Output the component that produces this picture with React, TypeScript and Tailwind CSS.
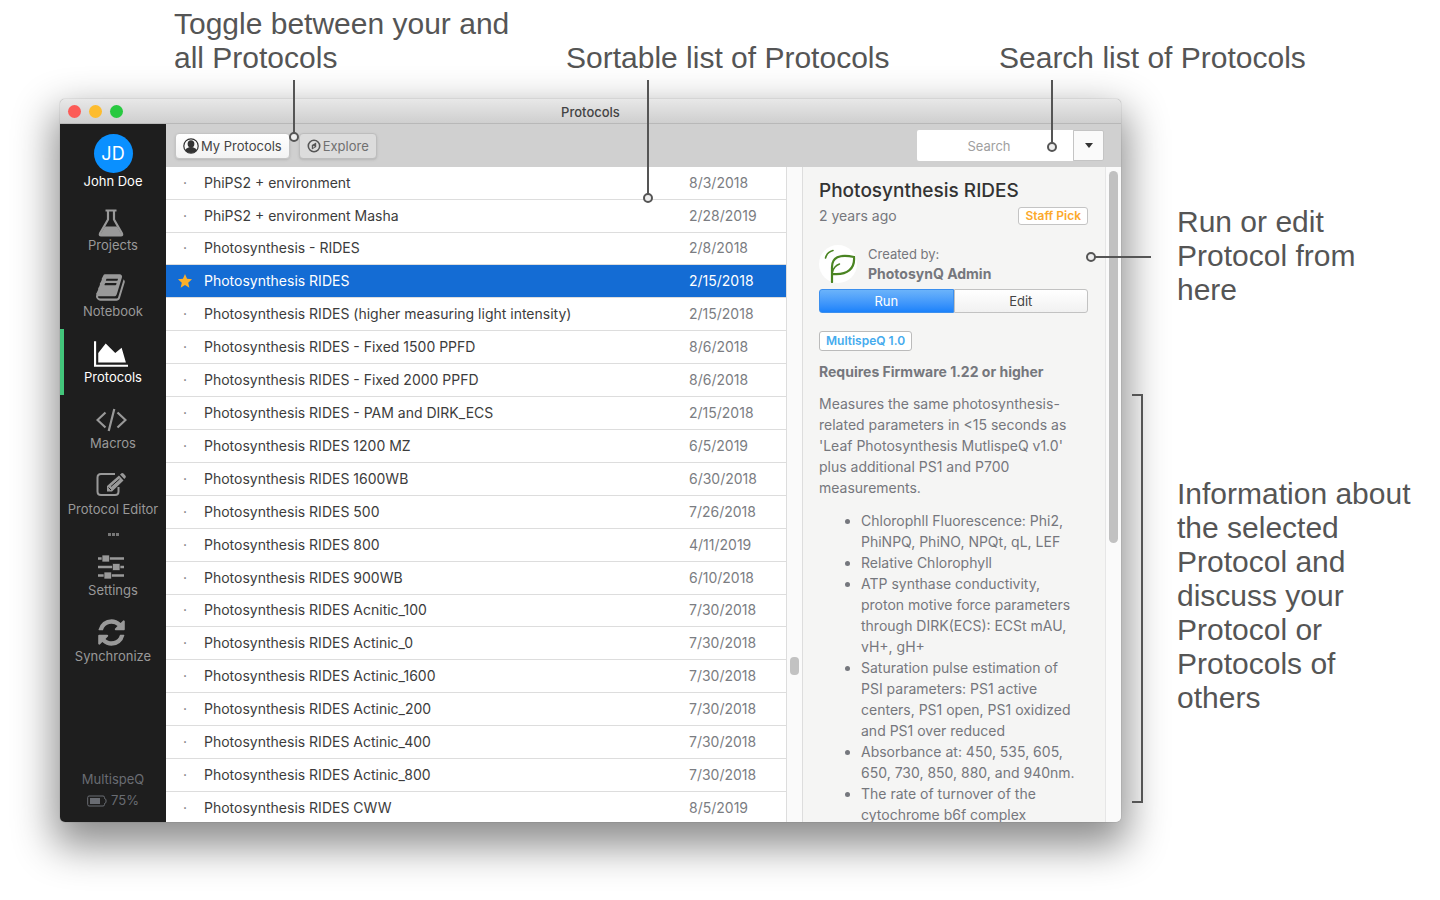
import type { ReactNode } from "react";

const FONT = "font-['Inter','Noto_Sans',sans-serif]";

const rows: [string, string][] = [
  ["PhiPS2 + environment", "8/3/2018"],
  ["PhiPS2 + environment Masha", "2/28/2019"],
  ["Photosynthesis - RIDES", "2/8/2018"],
  ["Photosynthesis RIDES", "2/15/2018"],
  ["Photosynthesis RIDES (higher measuring light intensity)", "2/15/2018"],
  ["Photosynthesis RIDES - Fixed 1500 PPFD", "8/6/2018"],
  ["Photosynthesis RIDES - Fixed 2000 PPFD", "8/6/2018"],
  ["Photosynthesis RIDES - PAM and DIRK_ECS", "2/15/2018"],
  ["Photosynthesis RIDES 1200 MZ", "6/5/2019"],
  ["Photosynthesis RIDES 1600WB", "6/30/2018"],
  ["Photosynthesis RIDES 500", "7/26/2018"],
  ["Photosynthesis RIDES 800", "4/11/2019"],
  ["Photosynthesis RIDES 900WB", "6/10/2018"],
  ["Photosynthesis RIDES Acnitic_100", "7/30/2018"],
  ["Photosynthesis RIDES Actinic_0", "7/30/2018"],
  ["Photosynthesis RIDES Actinic_1600", "7/30/2018"],
  ["Photosynthesis RIDES Actinic_200", "7/30/2018"],
  ["Photosynthesis RIDES Actinic_400", "7/30/2018"],
  ["Photosynthesis RIDES Actinic_800", "7/30/2018"],
  ["Photosynthesis RIDES CWW", "8/5/2019"],
];
const selectedRow = 3;

const FlaskIcon = () => (
  <svg width="26" height="28" viewBox="0 0 26 28" fill="none" stroke="currentColor">
    <path d="M7.500 1.500h11" strokeWidth="2" />
    <path d="M10 2v8.500L2 24.500Q1.300 26.500 3 26.500h20q1.700 0 1-2L16 10.500V2" strokeWidth="2.200" />
    <path d="M7 17.500h12l5 8.500H2z" fill="currentColor" stroke="none" />
  </svg>
);
const BookIcon = () => (
  <svg width="31" height="31" viewBox="0 0 1792 1792" fill="currentColor">
    <path d="M1639 478q40 57 18 129l-275 906q-19 64-76.5 107.5t-122.5 43.5h-923q-77 0-148.5-53.5t-99.5-131.5q-24-67-2-127 0-4 3-27t4-37q1-8-3-21.5t-3-19.5q2-11 8-21t16.5-23.5 16.5-23.5q23-38 45-91.5t30-91.5q3-10 .5-30t-.5-28q3-11 17-28t17-23q21-36 42-92t25-90q1-9-2.500-32t.5-28q4-13 22-30.500t22-22.500q19-26 42.500-84.500t27.500-96.500q1-8-3-25.500t-2-26.500q2-8 9-18t18-23 17-21q8-12 16.500-30.500t15-35 16-36 19.500-32 26.500-23.500 36-11.500 47.500 5.500l-1 3q38-9 51-9h761q74 0 114 56t18 130l-274 906q-36 119-71.500 153.500t-128.500 34.500h-869q-27 0-38 15-11 16-1 43 24 70 144 70h923q29 0 56-15.500t35-41.500l300-987q7-22 5-57 38 15 59 43zm-1064 2q-4 13 2 22.500t20 9.500h608q13 0 25.500-9.500t16.500-22.500l21-64q4-13-2-22.500t-20-9.500h-608q-13 0-25.500 9.500t-16.500 22.500zm-83 256q-4 13 2 22.500t20 9.500h608q13 0 25.500-9.500t16.500-22.500l21-64q4-13-2-22.500t-20-9.500h-608q-13 0-25.500 9.500t-16.500 22.500z" />
  </svg>
);
const ChartIcon = () => (
  <svg width="34" height="30" viewBox="0 0 2048 1792" fill="currentColor">
    <path d="M2048 1536v128h-2048v-1536h128v1408h1920zm-384-1024l256 896h-1664v-576l448-576 576 576z" />
  </svg>
);
const CodeIcon = () => (
  <svg width="31" height="27" viewBox="0 0 31 27" fill="none" stroke="currentColor" strokeWidth="2.200">
    <path d="M9.500 4.500 1.500 12l8 7.500M21.500 4.500l8 7.500-8 7.500M18.300 1l-5.600 22" />
  </svg>
);
const EditIcon = () => (
  <svg width="32" height="30" viewBox="0 0 32 30" fill="none" stroke="currentColor">
    <path d="M20 3H6Q2.500 3 2.500 6.500v14Q2.500 24 6 24h14q3.500 0 3.500-3.500V16" strokeWidth="2" />
    <path d="M12 20.500V15L24 4.500l4.500 5L17 20.500zM25 3.500l1.500-1.200q1-.7 2 .2l2 2.200q.8 1 0 2L29.300 8z" fill="currentColor" stroke="none" />
    <path d="m16 15.500 8.500-7.500M13.500 16.500l2.500 2.500" stroke="#1e1e1e" strokeWidth="1" />
  </svg>
);
const SlidersIcon = () => (
  <svg width="26" height="27" viewBox="0 0 26 27" fill="currentColor">
    <path d="M0 2.300h26v2.400H0zM0 10.800h26v2.400H0zM0 19.300h26v2.400H0z" />
    <path d="M4 0h7.500v7H4zM14.500 8.500H22v7h-7.500zM6 17h7.500v7H6z" stroke="#1e1e1e" strokeWidth=".7" />
  </svg>
);
const RefreshIcon = () => (
  <svg width="31" height="31" viewBox="0 0 1792 1792" fill="currentColor">
    <path d="M1639 1056q0 5-1 7-64 268-268 434.500t-478 166.500q-146 0-282.500-55t-243.500-157l-129 129q-19 19-45 19t-45-19-19-45v-448q0-26 19-45t45-19h448q26 0 45 19t19 45-19 45l-137 137q71 66 161 102t187 36q134 0 250-65t186-179q11-17 53-117 8-23 30-23h192q13 0 22.500 9.500t9.500 22.500zm25-800v448q0 26-19 45t-45 19h-448q-26 0-45-19t-19-45 19-45l138-138q-148-137-349-137-134 0-250 65t-186 179q-11 17-53 117-8 23-30 23h-199q-13 0-22.500-9.500t-9.500-22.500v-7q65-268 270-434.500t480-166.500q146 0 284 55.500t245 156.500l130-129q19-19 45-19t45 19 19 45z" />
  </svg>
);
const UserIcon = () => (
  <svg width="16" height="16" viewBox="0 0 16 16">
    <circle cx="8" cy="8" r="7.200" fill="none" stroke="#333" strokeWidth="1.200" />
    <path d="M8 2.300c2.200 0 3.400 1.500 3.400 3.600S9.800 10 8 10 4.600 8 4.600 5.900 5.800 2.300 8 2.300z" fill="#333" />
    <path d="M2 12Q3 10.200 6 9.300h4q3 .9 4 2.700Q12 15 8 15t-6-3z" fill="#333" />
  </svg>
);
const CompassIcon = () => (
  <svg width="14" height="14" viewBox="0 0 14 14" fill="none" stroke="#555">
    <circle cx="7" cy="7" r="5.700" strokeWidth="1.600" />
    <path d="M4.800 6 9.200 3.500V8L4.800 10.500z" fill="#555" stroke="none" />
    <path d="M6.200 6.800 8 7.700 6.200 8.800z" fill="#e0e0e0" stroke="none" />
  </svg>
);
const LeafLogo = () => (
  <svg width="38" height="38" viewBox="0 0 38 38" className="shrink-0">
    <circle cx="19" cy="19" r="19" fill="#fff" />
    <g fill="none" stroke="#4a8422" strokeLinecap="round">
      <path d="M13 37V22C13 13 20 8.500 35 12c1 11-6 18.500-21.500 17" strokeWidth="2.200" />
      <path d="M13.500 27q1.500-6 7-8" strokeWidth="1.500" />
      <path d="M6.500 13Q8 7 14 5.500" strokeWidth="1.600" />
    </g>
  </svg>
);

function NavItem({ icon, label, active }: { icon: ReactNode; label: string; active?: boolean }) {
  return (
    <a
      href="#"
      className={
        active
          ? "flex h-[66px] flex-col items-center border-l-4 border-[#43c57b] pr-1 text-white"
          : "flex h-[66px] flex-col items-center text-[#999]"
      }
    >
      <span className="flex h-10 w-full items-end justify-center pr-1">{icon}</span>
      <span className="text-[13px] leading-4 whitespace-nowrap">{label}</span>
    </a>
  );
}

function Dot({ className }: { className: string }) {
  return <span className={`absolute size-[10px] rounded-full border-2 border-[#555] bg-[#eee] ${className}`} />;
}

export default function App() {
  return (
    <div className="relative flex min-h-screen overflow-hidden bg-white font-['Liberation_Sans',sans-serif] text-[30px] leading-[34px] text-[#555]">
      <div className="flex min-w-0 flex-1 flex-col pl-[60px]">
        <div className="flex h-[99px] shrink-0 items-end pb-6 pl-[114px] whitespace-nowrap">
          <p className="w-[392px]">
            Toggle between your and
            <br />
            all Protocols
          </p>
          <p className="w-[433px]">Sortable list of Protocols</p>
          <p className="w-0">Search list of Protocols</p>
        </div>

        <div className={`flex h-[calc(100vh-177px)] min-h-[520px] flex-col overflow-hidden rounded-[5px] bg-[#d0d0d0] shadow-[0_18px_40px_6px_rgba(0,0,0,0.45),0_0_1px_rgba(0,0,0,0.5)] ${FONT}`}>
          <header className="flex h-[25px] shrink-0 items-center border-b border-[#b8b8b8] bg-linear-to-b from-[#e8e8e8] to-[#cfcfcf] px-2 pt-px text-[13px] leading-4 text-[#444]">
            <div className="flex w-16 gap-2">
              <span className="size-[13px] rounded-full bg-[#fc5b57]" />
              <span className="size-[13px] rounded-full bg-[#fdbc2e]" />
              <span className="size-[13px] rounded-full bg-[#28c940]" />
            </div>
            <h1 className="flex-1 pr-16 text-center font-medium">Protocols</h1>
          </header>

          <div className="flex min-h-0 flex-1">
            <nav className="flex w-[106px] shrink-0 flex-col bg-[#1e1e1e]">
              <div className="flex h-[73px] flex-col items-center pt-[10px] text-[13px] leading-4 text-white">
                <span className="flex size-[39px] shrink-0 items-center justify-center rounded-full bg-[#0a90ff] text-lg">JD</span>
                John Doe
              </div>
              <NavItem icon={<FlaskIcon />} label="Projects" />
              <NavItem icon={<BookIcon />} label="Notebook" />
              <NavItem icon={<ChartIcon />} label="Protocols" active />
              <NavItem icon={<CodeIcon />} label="Macros" />
              <NavItem icon={<EditIcon />} label="Protocol Editor" />
              <div className="flex h-[15px] items-center justify-center gap-px">
                <span className="size-[3px] bg-[#777]" />
                <span className="size-[3px] bg-[#777]" />
                <span className="size-[3px] bg-[#777]" />
              </div>
              <NavItem icon={<SlidersIcon />} label="Settings" />
              <NavItem icon={<RefreshIcon />} label="Synchronize" />
              <div className="mt-auto flex flex-col items-center pb-[11px] text-[13px] leading-[21px] text-[#696c72]">
                <span>MultispeQ</span>
                <span className="flex items-center gap-1">
                  <svg width="20" height="12" viewBox="0 0 20 12" fill="none" stroke="currentColor">
                    <path d="M2 1h14q1.500 0 1.500 1.500v1L19 4.500v3l-1.500 1v1Q17.500 11 16 11H2Q.700 11 .700 9.500v-7Q.700 1 2 1z" />
                    <path d="M3 3h10v6H3z" fill="currentColor" stroke="none" />
                  </svg>
                  75%
                </span>
              </div>
            </nav>

            <div className="flex min-w-0 flex-1 flex-col">
              <div className="flex h-[43px] shrink-0 items-center pr-[17px] pl-[9px] text-[13px] text-[#444]">
                <button className="flex h-[26px] items-center gap-[2px] rounded-[4px] border border-[#c4c4c4] bg-linear-to-b from-white to-[#f3f3f3] px-[7px] shadow-sm">
                  <UserIcon />
                  My Protocols
                </button>
                <button className="ml-[9px] flex h-[26px] items-center gap-[2px] rounded-[4px] border border-[#bdbdbd] bg-[#dcdcdc] px-[7px] text-[#707070] shadow-sm">
                  <CompassIcon />
                  Explore
                </button>
                <input
                  aria-label="Search"
                  placeholder="Search"
                  className="ml-auto h-[31px] w-[156px] rounded-l-[2px] bg-white pr-3 text-center placeholder:text-[#a0a0a0]"
                />
                <button aria-label="Search options" className="flex h-[31px] w-[31px] items-center justify-center rounded-r-[2px] border border-[#c4c4c4] bg-[#fafafa]">
                  <svg width="8" height="5" viewBox="0 0 8 5">
                    <path d="M0 0h8L4 5z" fill="#333" />
                  </svg>
                </button>
              </div>

              <div className="flex min-h-0 flex-1">
                <div className="min-w-0 flex-1 overflow-hidden bg-white">
                  <table className="h-[658px] w-full table-fixed border-collapse text-[14px] leading-5 text-[#3c3c3c]">
                    <tbody>
                      {rows.map(([name, date], i) => (
                        <tr
                          key={name}
                          className={i === selectedRow ? "border-b border-[#ddd] bg-[#146cd4] text-white" : "border-b border-[#ddd]"}
                        >
                          <td className="w-[38px] p-0 text-center text-[#777]">
                            {i === selectedRow ? (
                              <svg width="14" height="14" viewBox="0 0 24 24" fill="#fcb02b" className="mx-auto">
                                <path d="m12 0 3.500 8.200 8.500.8-6.500 5.800 2 8.700L12 19l-7.500 4.500 2-8.700L0 9l8.500-.8z" />
                              </svg>
                            ) : (
                              "·"
                            )}
                          </td>
                          <td className="truncate p-0">{name}</td>
                          <td className={i === selectedRow ? "w-[97px] p-0" : "w-[97px] p-0 text-[#7b7d82]"}>{date}</td>
                        </tr>
                      ))}
                    </tbody>
                  </table>
                </div>
                <div className="relative w-[17px] shrink-0 border-x border-[#ddd] bg-[#fafafa]">
                  <span className="absolute top-[490px] left-[3px] h-[18px] w-[9px] rounded-[4px] bg-[#c2c2c2]" />
                </div>

                <section className="w-[302px] shrink-0 overflow-hidden bg-[#f5f5f4] pt-[13px] pr-[17px] pl-4 text-[14px] leading-[21px] text-[#75777d]">
                  <h2 className="text-[19px] leading-[22px] font-medium text-[#333]">Photosynthesis RIDES</h2>
                  <div className="mt-[3px] flex items-center justify-between">
                    <span>2 years ago</span>
                    <span className="rounded-[3px] border border-[#c4c4c4] bg-white px-[6px] text-[12px] leading-4 font-semibold text-[#fca92b]">Staff Pick</span>
                  </div>
                  <div className="mt-[18px] flex h-[40px] items-center gap-[11px]">
                    <LeafLogo />
                    <div>
                      <p className="text-[13px] leading-5">Created by:</p>
                      <p className="leading-5 font-bold">PhotosynQ Admin</p>
                    </div>
                  </div>
                  <div className="mt-[5px] flex h-6 text-[13px] leading-5">
                    <button className="flex-1 rounded-l-[3px] border border-[#3b8fee] bg-linear-to-b from-[#6bb3fa] to-[#1a82fb] text-white">Run</button>
                    <button className="flex-1 rounded-r-[3px] border border-[#c2c2c2] bg-linear-to-b from-white to-[#f1f1f1] text-[#444]">Edit</button>
                  </div>
                  <div className="mt-[18px] flex">
                    <span className="rounded-[3px] border border-[#bbb] bg-white px-[6px] text-[12px] leading-[18px] font-semibold text-[#45abee]">MultispeQ 1.0</span>
                  </div>
                  <p className="mt-[10px] font-bold">Requires Firmware 1.22 or higher</p>
                  <p className="mt-[11px]">
                    Measures the same photosynthesis-related parameters in &lt;15 seconds as 'Leaf Photosynthesis MutlispeQ v1.0' plus additional PS1 and P700 measurements.
                  </p>
                  <ul className="mt-3 list-disc pr-2 pl-[42px]">
                    <li>Chlorophll Fluorescence: Phi2, PhiNPQ, PhiNO, NPQt, qL, LEF</li>
                    <li>Relative Chlorophyll</li>
                    <li>ATP synthase conductivity, proton motive force parameters through DIRK(ECS): ECSt mAU, vH+, gH+</li>
                    <li>Saturation pulse estimation of PSI parameters: PS1 active centers, PS1 open, PS1 oxidized and PS1 over reduced</li>
                    <li>Absorbance at: 450, 535, 605, 650, 730, 850, 880, and 940nm.</li>
                    <li>The rate of turnover of the cytochrome b6f complex</li>
                  </ul>
                </section>
                <div className="w-4 shrink-0 border-l border-[#e6e6e6] bg-[#fafafa] pt-1 pl-[3px]">
                  <div className="h-[372px] w-[9px] rounded-full bg-[#c1c1c1]" />
                </div>
              </div>
            </div>
          </div>
        </div>
      </div>

      <aside className="relative w-[319px] shrink-0 pt-[205px] pr-5 pl-14">
        <p className="w-[200px]">Run or edit Protocol from here</p>
        <p className="mt-[170px]">
          Information about the selected Protocol and discuss your Protocol or Protocols of others
        </p>
        <span className="absolute top-[256px] -left-[26px] h-[2px] w-[56px] bg-[#555]" />
        <Dot className="top-[252px] -left-[35px]" />
        <span className="absolute top-[394px] left-[11px] h-[409px] w-[11px] border-2 border-l-0 border-[#555]" />
      </aside>

      <span className="absolute top-[80px] left-[293px] h-[53px] w-[2px] bg-[#555]" />
      <Dot className="top-[132px] left-[289px]" />
      <span className="absolute top-[80px] left-[647px] h-[114px] w-[2px] bg-[#555]" />
      <Dot className="top-[193px] left-[643px]" />
      <span className="absolute top-[80px] left-[1051px] h-[63px] w-[2px] bg-[#555]" />
      <Dot className="top-[142px] left-[1047px]" />
    </div>
  );
}
